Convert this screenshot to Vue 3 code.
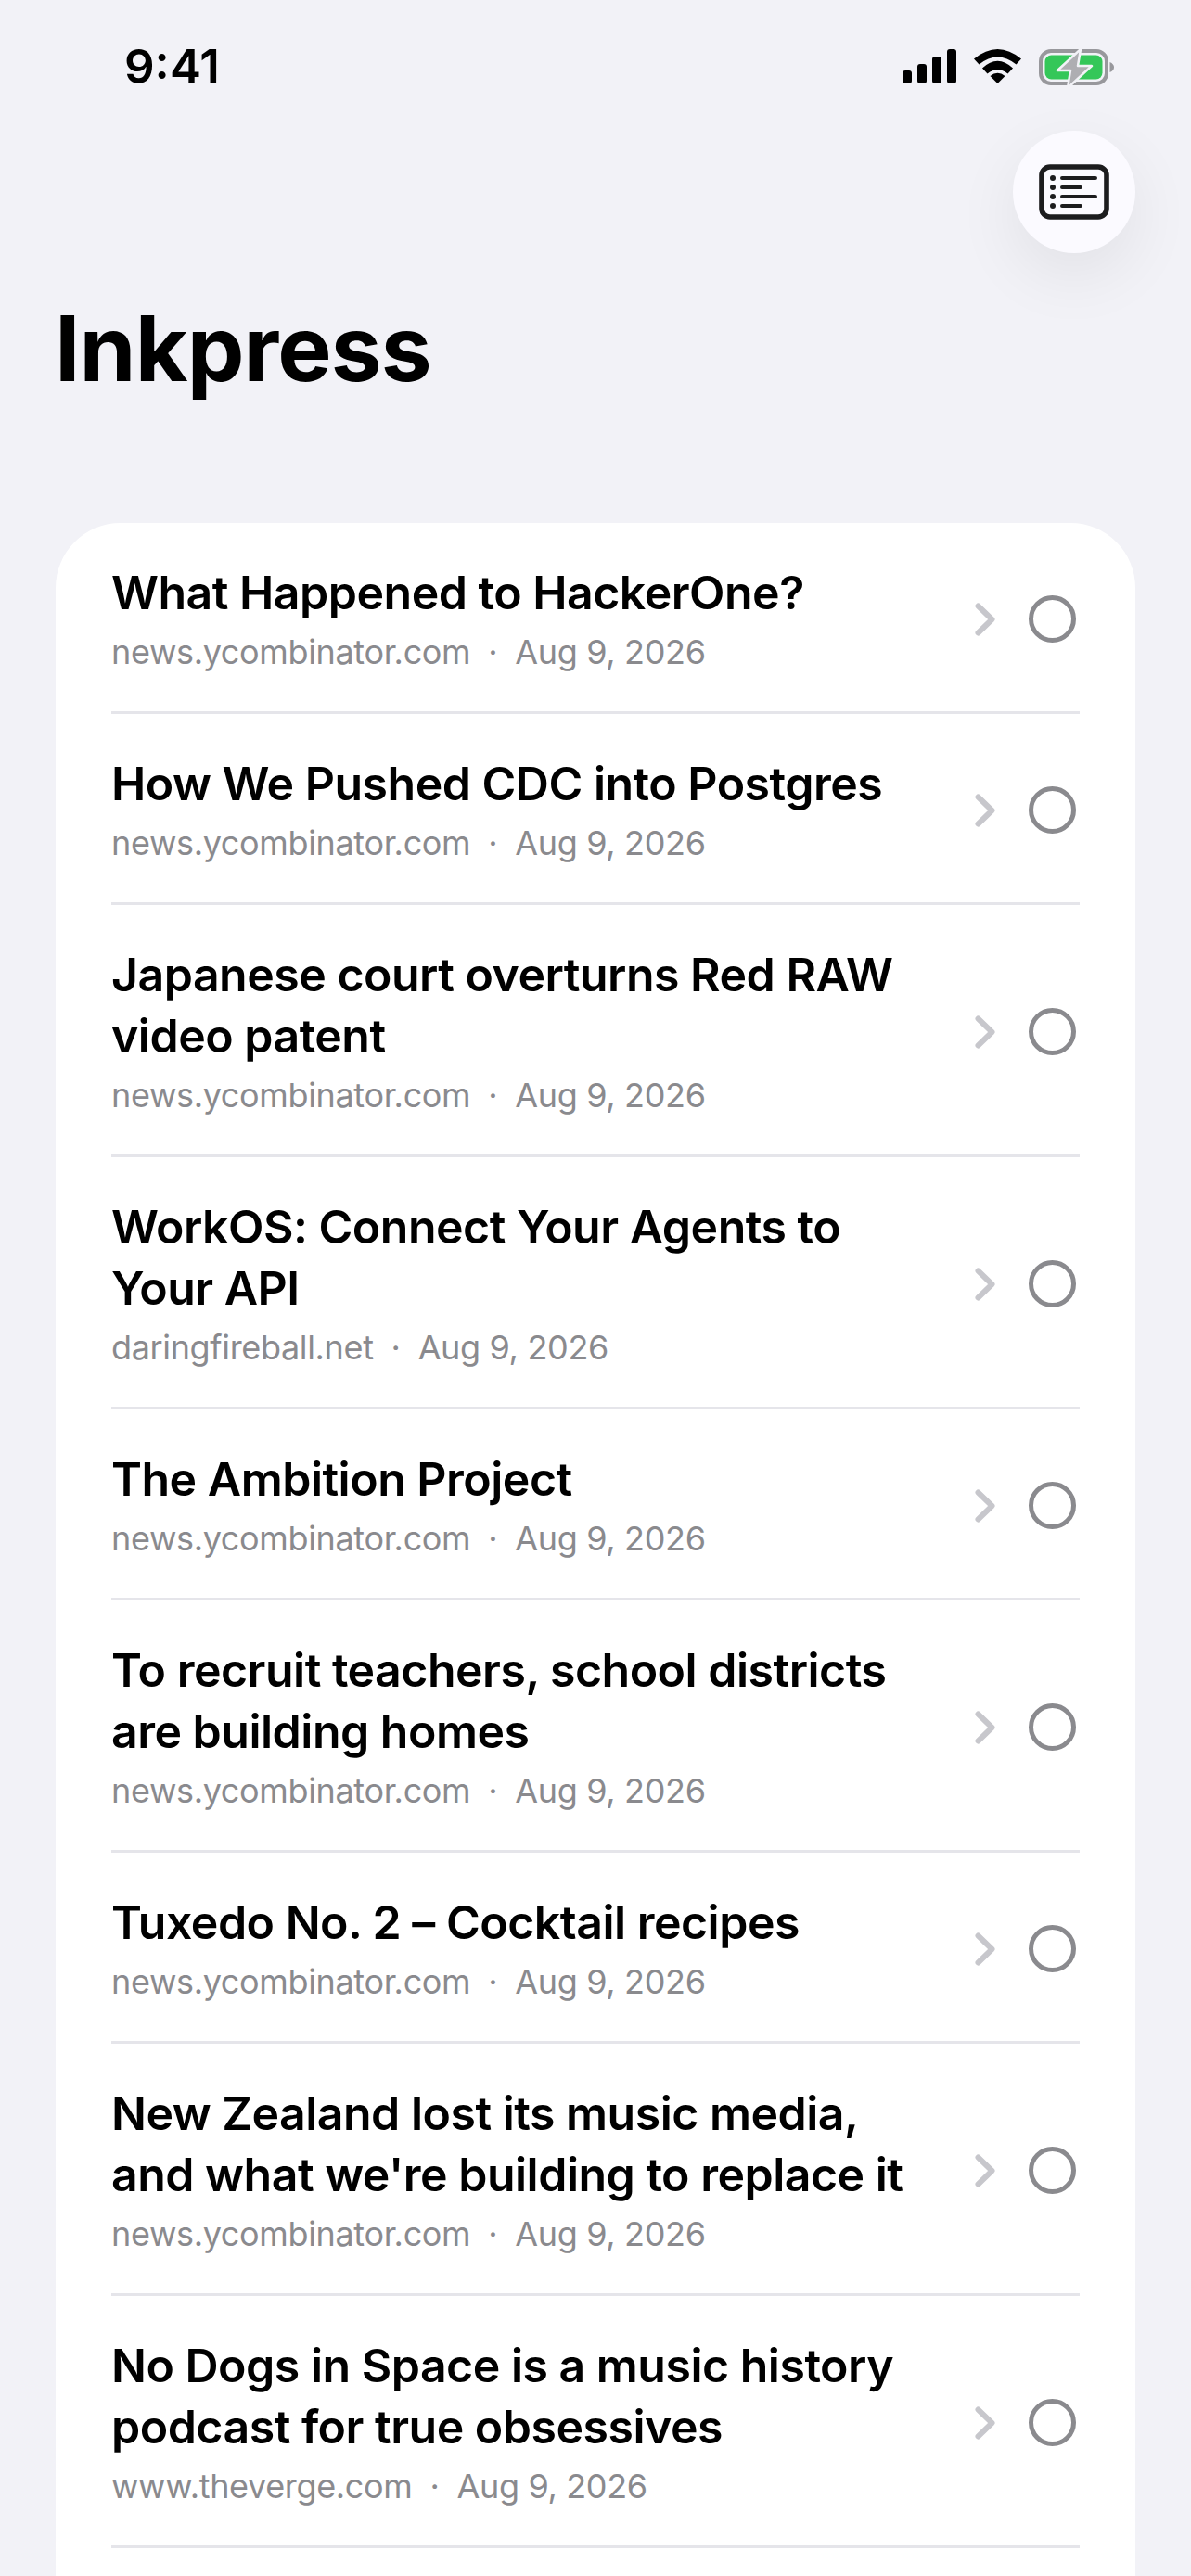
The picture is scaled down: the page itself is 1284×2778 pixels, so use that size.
<template>
  <div class="page">
    <div class="status-bar">
      <span class="time">9:41</span>
      <div class="status-icons">
        <svg class="signal" width="58" height="37" viewBox="0 0 58 37">
          <rect x="0" y="23" width="10" height="14" rx="3" />
          <rect x="16" y="16" width="10" height="21" rx="3" />
          <rect x="32" y="8" width="10" height="29" rx="3" />
          <rect x="48" y="0" width="10" height="37" rx="3" />
        </svg>
        <svg class="wifi" width="51" height="37" viewBox="0 0 51 37">
          <path d="M0 10.500 Q25.500 -10.500 51 10.500 L45.500 16.500 Q25.500 0.500 5.500 16.500 Z" />
          <path d="M9 20.500 Q25.500 5 42 20.500 L36.500 26.500 Q25.500 17.500 14.500 26.500 Z" />
          <path d="M25.500 37 L17.500 29 Q25.500 22.500 33.500 29 Z" />
        </svg>
        <svg class="battery" width="82" height="42" viewBox="0 0 82 42">
          <rect x="2" y="2" width="71" height="35" rx="11" fill="none" stroke="#98989c" stroke-width="4" />
          <rect x="6.500" y="6.500" width="62" height="26" rx="7" fill="#34c759" />
          <path d="M76.500 14 Q81 16 81 19.500 Q81 23 76.500 25 Z" fill="#98989c" />
          <path d="M45 0 L20 23 H34 L31 42 L57 18 H42 Z" fill="#aeaeb2" stroke="#f2f2f7" stroke-width="2.500" stroke-linejoin="round" />
        </svg>
      </div>
    </div>

    <div class="toolbar">
      <button class="list-btn" type="button">
        <svg width="76" height="60" viewBox="0 0 76 60">
          <rect x="3" y="3" width="70" height="54" rx="9" fill="none" stroke="#1c1c1e" stroke-width="5.600" />
          <circle cx="15" cy="15" r="3" fill="#1c1c1e" />
          <circle cx="15" cy="25" r="3" fill="#1c1c1e" />
          <circle cx="15" cy="35" r="3" fill="#1c1c1e" />
          <circle cx="15" cy="45" r="3" fill="#1c1c1e" />
          <path d="M25 15 H61 M25 25 H45 M25 35 H61 M25 45 H45" stroke="#1c1c1e" stroke-width="4" stroke-linecap="round" />
        </svg>
      </button>
    </div>

    <h1 class="title">Inkpress</h1>

    <div class="card">
      <div v-for="item in items" :key="item.title" class="row">
        <div class="text">
          <div class="row-title">{{ item.title }}</div>
          <div class="meta">
            <span>{{ item.site }}</span>
            <span class="dot">·</span>
            <span>{{ item.date }}</span>
          </div>
        </div>
        <div class="actions">
          <svg class="chevron" width="22" height="36" viewBox="0 0 22 36">
            <path d="M3.500 3.500 L18.500 18 L3.500 32.500" fill="none" stroke="#c7c7cc" stroke-width="6" stroke-linecap="round" stroke-linejoin="round" />
          </svg>
          <span class="circle"></span>
        </div>
      </div>
    </div>
  </div>
</template>

<script setup>
const items = [
  { title: 'What Happened to HackerOne?', site: 'news.ycombinator.com', date: 'Aug 9, 2026' },
  { title: 'How We Pushed CDC into Postgres', site: 'news.ycombinator.com', date: 'Aug 9, 2026' },
  { title: 'Japanese court overturns Red RAW video patent', site: 'news.ycombinator.com', date: 'Aug 9, 2026' },
  { title: 'WorkOS: Connect Your Agents to Your API', site: 'daringfireball.net', date: 'Aug 9, 2026' },
  { title: 'The Ambition Project', site: 'news.ycombinator.com', date: 'Aug 9, 2026' },
  { title: 'To recruit teachers, school districts are building homes', site: 'news.ycombinator.com', date: 'Aug 9, 2026' },
  { title: 'Tuxedo No. 2 – Cocktail recipes', site: 'news.ycombinator.com', date: 'Aug 9, 2026' },
  { title: "New Zealand lost its music media, and what we're building to replace it", site: 'news.ycombinator.com', date: 'Aug 9, 2026' },
  { title: 'No Dogs in Space is a music history podcast for true obsessives', site: 'www.theverge.com', date: 'Aug 9, 2026' }
]
</script>

<style>
html,
body {
  margin: 0;
  background: #f2f2f7;
}
</style>

<style scoped>
.page {
  height: 2778px;
  overflow: hidden;
  background: #f2f2f7;
  font-family: Inter, "Liberation Sans", sans-serif;
  color: #000;
}

.status-bar {
  display: flex;
  justify-content: space-between;
  align-items: flex-start;
  height: 141px;
  box-sizing: border-box;
  padding: 44px 82px 0 134px;
}

.time {
  font-size: 51px;
  line-height: 56px;
  font-weight: 600;
}

.status-icons {
  display: flex;
  align-items: flex-start;
  gap: 19px;
  padding-top: 9px;
}

.toolbar {
  display: flex;
  justify-content: flex-end;
  padding-right: 60px;
}

.list-btn {
  display: flex;
  align-items: center;
  justify-content: center;
  width: 132px;
  height: 132px;
  padding: 0;
  border: none;
  border-radius: 50%;
  background: #fbfaff;
  box-shadow: 0 24px 70px rgba(0, 0, 0, 0.07);
}

.title {
  margin: 43px 0 128px 59px;
  font-size: 98px;
  line-height: 120px;
  font-weight: 700;
  letter-spacing: -0.9px;
}

.card {
  margin: 0 60px;
  padding: 0 60px 200px;
  background: #fff;
  border-radius: 70px;
}

.row {
  display: flex;
  align-items: center;
  border-bottom: 3px solid #e5e5ea;
  padding: 42px 0 40px;
}

.text {
  flex: 1;
  min-width: 0;
  padding-right: 40px;
}

.row-title {
  font-size: 50px;
  line-height: 66px;
  font-weight: 600;
  letter-spacing: -0.5px;
}

.meta {
  margin-top: 7px;
  font-size: 36px;
  line-height: 48px;
  letter-spacing: -0.35px;
  color: #8a8a8e;
}

.dot {
  margin: 0 19px;
}

.actions {
  display: flex;
  align-items: center;
  gap: 36px;
  margin-top: 2px;
  padding-right: 4px;
}

.circle {
  display: block;
  width: 51px;
  height: 51px;
  box-sizing: border-box;
  border: 5px solid #8a8a8e;
  border-radius: 50%;
}
</style>
